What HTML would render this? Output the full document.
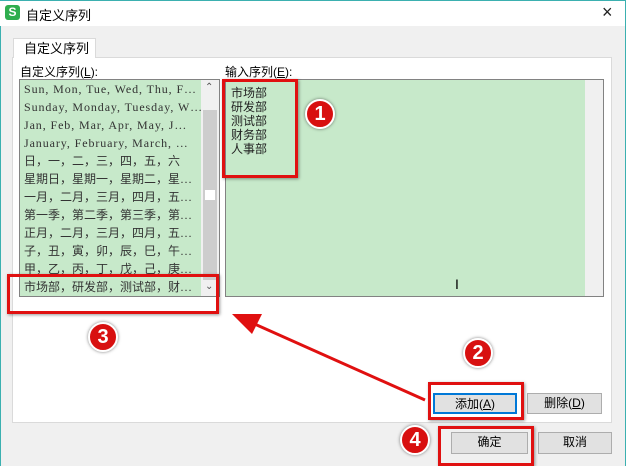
<!DOCTYPE html>
<html><head><meta charset="utf-8"><style>
*{margin:0;padding:0;box-sizing:border-box}
body{width:626px;height:466px;overflow:hidden;background:#f0f0f0;position:relative;font-family:"Liberation Sans","Noto Sans CJK SC",sans-serif;font-size:12px;color:#000}
.a{position:absolute}
.list div{height:18px;line-height:18px;white-space:nowrap;font-family:"Liberation Serif","Noto Sans CJK SC",serif;font-size:12px;color:#333;letter-spacing:0.9px}
.list div.z{letter-spacing:0;width:176px;overflow:hidden}
.btn{position:absolute;background:#e1e1e1;border:1px solid #adadad;text-align:center;line-height:19px;font-size:12px}
.red{position:absolute;border:3px solid #e01010;box-shadow:1px 1px 3px rgba(0,0,0,.4)}
.c{position:absolute;width:30px;height:30px;border-radius:50%;background:#d81010;border:2px solid #fff;box-shadow:0 0 3px rgba(0,0,0,.5);color:#fff;font-weight:bold;font-size:20px;text-align:center;line-height:26px}
</style></head><body>
<div class="a" style="left:0;top:0;width:626px;height:26px;background:#fff;border-top:1px solid #3bb0b0;border-right:1px solid #3bb0b0"></div>
<div class="a" style="left:5px;top:5px;width:15px;height:15px;background:#2fae4e;border-radius:3px;color:#fff;font-weight:bold;font-size:12px;line-height:15px;text-align:center">S</div>
<div class="a" style="left:26px;top:5px;font-size:13px">自定义序列</div>
<div class="a" style="left:602px;top:2px;font-size:18px;color:#222">×</div>
<div class="a" style="left:625px;top:0;width:1px;height:466px;background:#3bb0b0"></div>
<div class="a" style="left:0;top:26px;width:1px;height:440px;background:#3bb0b0"></div>
<div class="a" style="left:12px;top:57px;width:600px;height:366px;background:#fff;border:1px solid #dadada"></div>
<div class="a" style="left:13px;top:38px;width:83px;height:20px;background:#fff;border:1px solid #dadada;border-bottom:none;padding-left:10px;line-height:19px;font-size:13px">自定义序列</div>
<div class="a" style="left:20px;top:63px;font-size:12px">自定义序列(<u>L</u>):</div>
<div class="a" style="left:225px;top:63px;font-size:12px">输入序列(<u>E</u>):</div>
<div class="a" style="left:19px;top:79px;width:201px;height:218px;background:#c7e9ca;border:1px solid #828282"></div>
<div class="a" style="left:201px;top:80px;width:18px;height:216px;background:#f0f0f0"></div>
<div class="a" style="left:203px;top:110px;width:14px;height:170px;background:#cdcdcd"></div>
<div class="a" style="left:205px;top:190px;width:10px;height:10px;background:#fff"></div>
<div class="a" style="left:205px;top:82px;color:#555;font-size:10px">⌃</div>
<div class="a" style="left:205px;top:281px;color:#555;font-size:10px">⌄</div>
<div class="a list" style="left:24px;top:80px">
<div>Sun, Mon, Tue, Wed, Thu, F…</div><div>Sunday, Monday, Tuesday, W…</div><div>Jan, Feb, Mar, Apr, May, J…</div><div>January, February, March, …</div><div class="z">日，一，二，三，四，五，六</div><div class="z">星期日，星期一，星期二，星…</div><div class="z">一月，二月，三月，四月，五…</div><div class="z">第一季，第二季，第三季，第…</div><div class="z">正月，二月，三月，四月，五…</div><div class="z">子，丑，寅，卯，辰，巳，午…</div><div class="z">甲，乙，丙，丁，戊，己，庚…</div><div class="z">市场部，研发部，测试部，财…</div></div>
<div class="a" style="left:225px;top:79px;width:379px;height:218px;background:#c7e9ca;border:1px solid #828282"></div>
<div class="a" style="left:585px;top:80px;width:18px;height:216px;background:#f0f0f0"></div>
<div class="a" style="left:231px;top:86px;line-height:14px;font-size:12px;color:#222">市场部<br>研发部<br>测试部<br>财务部<br>人事部</div>
<div class="a" style="left:455px;top:276px;font-size:14px">I</div>
<div class="btn" style="left:433px;top:393px;width:84px;height:21px;border:2px solid #0078d7">添加(<u>A</u>)</div>
<div class="btn" style="left:527px;top:393px;width:75px;height:21px">删除(<u>D</u>)</div>
<div class="btn" style="left:451px;top:432px;width:77px;height:22px">确定</div>
<div class="btn" style="left:538px;top:432px;width:74px;height:22px">取消</div>
<div class="red" style="left:222px;top:79px;width:76px;height:99px"></div>
<div class="red" style="left:7px;top:274px;width:212px;height:40px"></div>
<div class="red" style="left:428px;top:382px;width:96px;height:38px"></div>
<div class="red" style="left:438px;top:426px;width:96px;height:40px"></div>
<svg class="a" style="left:0;top:0" width="626" height="466"><line x1="425" y1="400" x2="250" y2="322" stroke="#e01010" stroke-width="3"/><polygon points="232,314 262,314 252,334" fill="#e01010"/></svg>
<div class="c" style="left:305px;top:99px">1</div>
<div class="c" style="left:463px;top:338px">2</div>
<div class="c" style="left:88px;top:322px">3</div>
<div class="c" style="left:400px;top:425px">4</div>
</body></html>
